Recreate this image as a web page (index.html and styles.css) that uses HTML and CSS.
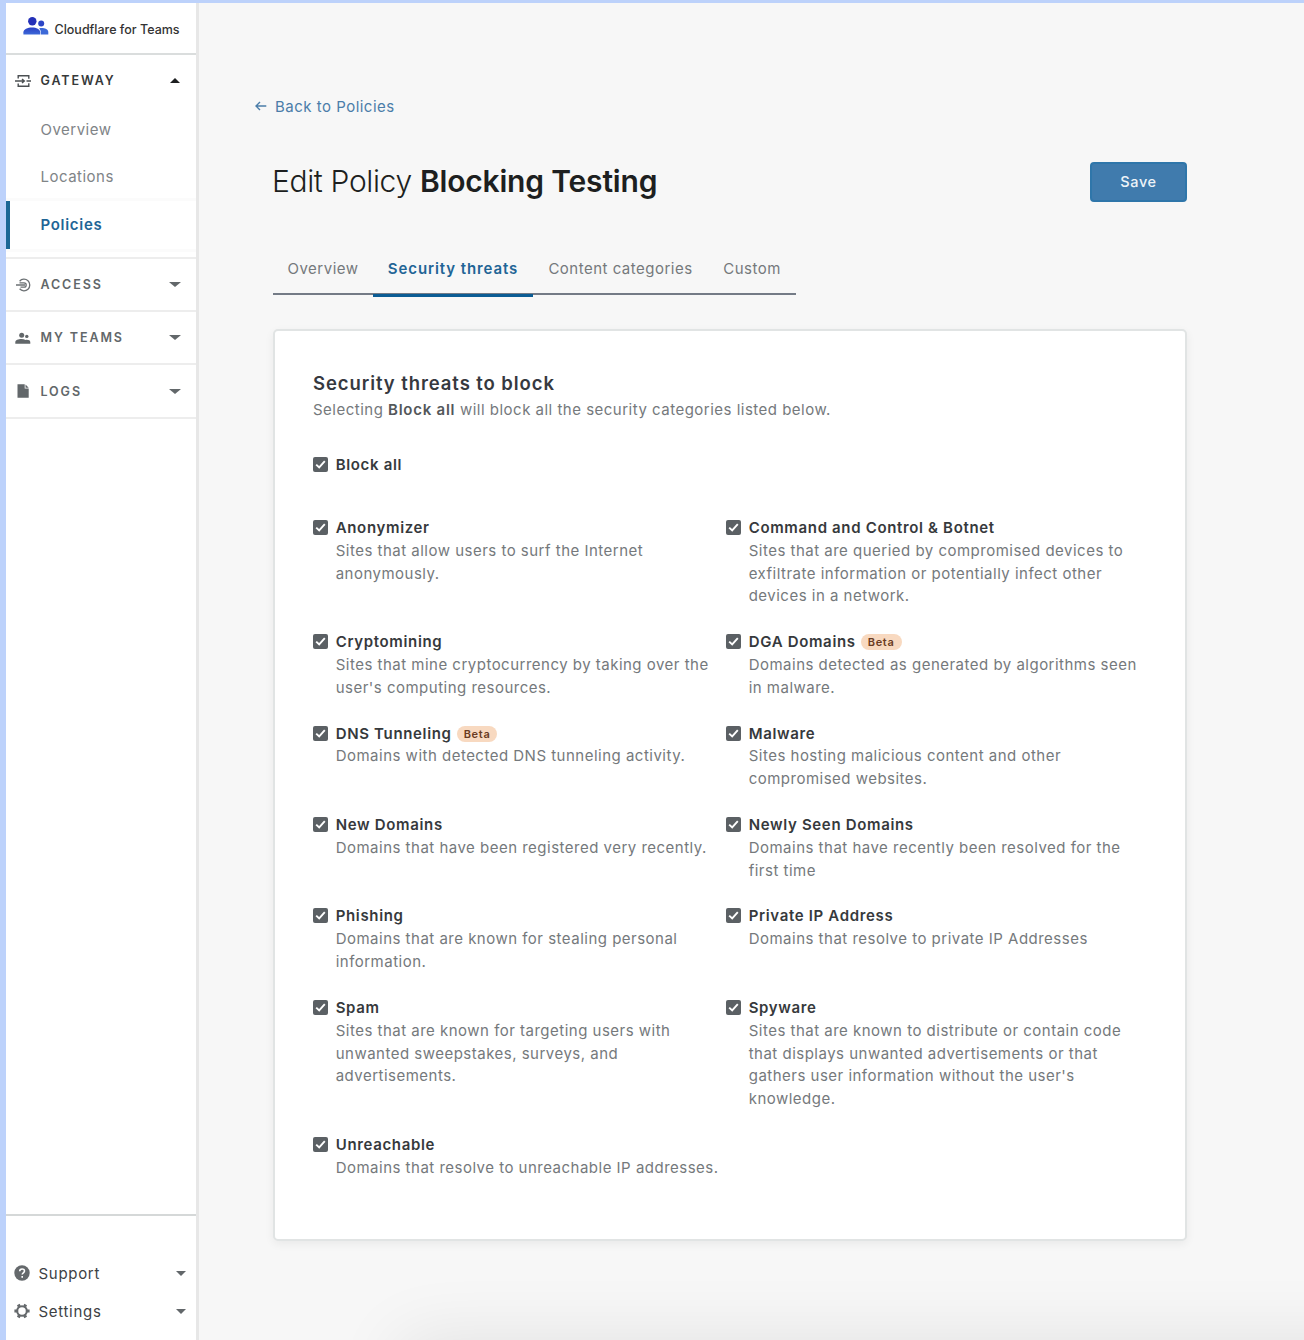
FILE: index.html
```
<!DOCTYPE html>
<html lang="en">
<head>
<meta charset="utf-8">
<title>Cloudflare for Teams</title>
<link rel="stylesheet" href="styles.css">
</head>
<body>
<div class="app">
  <aside class="sidebar">
    <div class="brand">
      <svg class="brand-icon" width="26" height="18" viewBox="0 0 26 18">
        <defs><linearGradient id="g" x1="0" y1="0" x2="0" y2="1"><stop offset="0" stop-color="#2a3fc4"/><stop offset="1" stop-color="#3d69d8"/></linearGradient></defs>
        <circle cx="9.3" cy="4.2" r="4.2" fill="#2430b8"/><circle cx="18.2" cy="6.4" r="3" fill="#2b45c6"/>
        <path d="M.4 17.5v-2.3c0-3.200 4.300-4.800 8.600-4.800s8.200 1.600 8.200 4.800v2.300z" fill="url(#g)"/>
        <path d="M17.800 17.500v-2.600c0-1.500-.7-2.600-1.700-3.500 3.600-.9 9.200.3 9.200 3.500v2.600z" fill="#3d69d8"/>
      </svg>
      <span class="brand-name">Cloudflare for Teams</span>
    </div>
    <nav class="nav">
      <div class="group open">
        <svg class="gi" width="18" height="14" viewBox="0 0 18 14" fill="none" stroke="#4b4f52" stroke-width="1.400"><path d="M3.200 4.600V1.700h10.600v3M3.200 9.400v2.900h10.600v-3M0 7h9M7 5 9.300 7 7 9M11.500 7H16"/></svg>
        <span class="gl">GATEWAY</span><i class="caret up"></i>
      </div>
      <a class="item">Overview</a>
      <a class="item">Locations</a>
      <a class="item active">Policies</a>
      <div class="group first">
        <svg class="gi" width="18" height="14" viewBox="0 0 18 14" fill="none" stroke="#6b7073" stroke-width="1.300"><path d="M4.600 3.200A5.800 5.800 0 1 1 4.600 10.800M1 7h9M4.500 4.800h4.500a2.200 2.200 0 0 1 0 4.400H5.500"/></svg>
        <span class="gl">ACCESS</span><i class="caret"></i>
      </div>
      <div class="group">
        <svg class="gi" width="18" height="14" viewBox="0 0 18 14" fill="#62676a"><circle cx="6.700" cy="4.200" r="2.500"/><circle cx="11.800" cy="5.400" r="1.700"/><path d="M.3 12.700v-1.500c0-2 3-3.100 6.200-3.100 1.700 0 3 .3 4 .9 2.500-.5 4.800.4 4.800 2.200v1.500z"/></svg>
        <span class="gl">MY TEAMS</span><i class="caret"></i>
      </div>
      <div class="group">
        <svg class="gi" width="18" height="14" viewBox="0 0 18 14" fill="#62676a"><path d="M2.500.2h7.200v4.300h4v9.300H2.500z"/><path d="M10.500.4l3.200 3.300h-3.200z"/></svg>
        <span class="gl">LOGS</span><i class="caret"></i>
      </div>
    </nav>
    <div class="foot">
      <div class="fi">
        <svg width="16" height="16" viewBox="0 0 16 16"><circle cx="8" cy="8" r="7.700" fill="#65696c"/><path d="M5.700 6.300c0-3.200 4.800-3 4.800-.3 0 1.800-2.300 1.800-2.300 3.600M8.200 11v1.700" fill="none" stroke="#fff" stroke-width="1.600"/></svg>
        <span>Support</span><i class="caret"></i>
      </div>
      <div class="fi">
        <svg width="16" height="16" viewBox="0 0 16 16" fill="none" stroke="#65696c"><circle cx="8" cy="8" r="4.800" stroke-width="2.100"/><path d="M5.300 3.500 4.300 1.500M10.700 3.500l1-2M13 8h2.600M10.700 12.500l1 2M5.300 12.500l-1 2M3 8H.4" stroke-width="3"/></svg>
        <span>Settings</span><i class="caret"></i>
      </div>
    </div>
  </aside>
  <main class="main">
    <a class="back"><svg width="12" height="10" viewBox="0 0 12 10" fill="none" stroke="#4b7da9" stroke-width="1.400"><path d="M11.300 5H1M5 1 1 5l4 4"/></svg><span>Back to Policies</span></a>
    <header class="head">
      <h1><span>Edit Policy</span> <b>Blocking Testing</b></h1>
      <button class="save">Save</button>
    </header>
    <div class="tabs"><a class="t1">Overview</a><a class="t2 on">Security threats</a><a class="t3">Content categories</a><a class="t4">Custom</a></div>
    <section class="card">
      <h2>Security threats to block</h2>
      <p class="intro">Selecting <b>Block all</b> will block all the security categories listed below.</p>
      <div class="opt all"><i class="cb"><svg viewBox="0 0 15 15"><path d="M3.200 7.600l3 2.900 5.600-6.300"/></svg></i><div><h3>Block all</h3></div></div>
      <div class="grid">
        <div class="opt"><i class="cb"><svg viewBox="0 0 15 15"><path d="M3.200 7.600l3 2.900 5.600-6.300"/></svg></i><div><h3>Anonymizer</h3><p>Sites that allow users to surf the Internet<br>anonymously.</p></div></div>
        <div class="opt"><i class="cb"><svg viewBox="0 0 15 15"><path d="M3.200 7.600l3 2.900 5.600-6.300"/></svg></i><div><h3>Command and Control &amp; Botnet</h3><p>Sites that are queried by compromised devices to<br>exfiltrate information or potentially infect other<br>devices in a network.</p></div></div>
        <div class="opt"><i class="cb"><svg viewBox="0 0 15 15"><path d="M3.200 7.600l3 2.900 5.600-6.300"/></svg></i><div><h3>Cryptomining</h3><p>Sites that mine cryptocurrency by taking over the<br>user's computing resources.</p></div></div>
        <div class="opt"><i class="cb"><svg viewBox="0 0 15 15"><path d="M3.200 7.600l3 2.900 5.600-6.300"/></svg></i><div><h3>DGA Domains<em>Beta</em></h3><p>Domains detected as generated by algorithms seen<br>in malware.</p></div></div>
        <div class="opt"><i class="cb"><svg viewBox="0 0 15 15"><path d="M3.200 7.600l3 2.900 5.600-6.300"/></svg></i><div><h3>DNS Tunneling<em>Beta</em></h3><p>Domains with detected DNS tunneling activity.</p></div></div>
        <div class="opt"><i class="cb"><svg viewBox="0 0 15 15"><path d="M3.200 7.600l3 2.900 5.600-6.300"/></svg></i><div><h3>Malware</h3><p>Sites hosting malicious content and other<br>compromised websites.</p></div></div>
        <div class="opt"><i class="cb"><svg viewBox="0 0 15 15"><path d="M3.200 7.600l3 2.900 5.600-6.300"/></svg></i><div><h3>New Domains</h3><p>Domains that have been registered very recently.</p></div></div>
        <div class="opt"><i class="cb"><svg viewBox="0 0 15 15"><path d="M3.200 7.600l3 2.900 5.600-6.300"/></svg></i><div><h3>Newly Seen Domains</h3><p>Domains that have recently been resolved for the<br>first time</p></div></div>
        <div class="opt"><i class="cb"><svg viewBox="0 0 15 15"><path d="M3.200 7.600l3 2.900 5.600-6.300"/></svg></i><div><h3>Phishing</h3><p>Domains that are known for stealing personal<br>information.</p></div></div>
        <div class="opt"><i class="cb"><svg viewBox="0 0 15 15"><path d="M3.200 7.600l3 2.900 5.600-6.300"/></svg></i><div><h3>Private IP Address</h3><p>Domains that resolve to private IP Addresses</p></div></div>
        <div class="opt"><i class="cb"><svg viewBox="0 0 15 15"><path d="M3.200 7.600l3 2.900 5.600-6.300"/></svg></i><div><h3>Spam</h3><p>Sites that are known for targeting users with<br>unwanted sweepstakes, surveys, and<br>advertisements.</p></div></div>
        <div class="opt"><i class="cb"><svg viewBox="0 0 15 15"><path d="M3.200 7.600l3 2.900 5.600-6.300"/></svg></i><div><h3>Spyware</h3><p>Sites that are known to distribute or contain code<br>that displays unwanted advertisements or that<br>gathers user information without the user's<br>knowledge.</p></div></div>
        <div class="opt"><i class="cb"><svg viewBox="0 0 15 15"><path d="M3.200 7.600l3 2.900 5.600-6.300"/></svg></i><div><h3>Unreachable</h3><p>Domains that resolve to unreachable IP addresses.</p></div></div>
      </div>
    </section>
  </main>
</div>
</body>
</html>
```
FILE: styles.css
```
* { box-sizing: border-box; }
body { margin: 0; background: #bdd2fb; font-family: Inter, "Liberation Sans", sans-serif; font-size: 15px; letter-spacing: .49px; color: #75797c; }
h1, h2, h3, p { margin: 0; }
.app { display: flex; height: 1340px; padding: 3px 0 0 6px; overflow: hidden; }
.sidebar { width: 193px; flex: none; display: flex; flex-direction: column; background: #fff; border-right: 3px solid #e7e7e7; }
.brand { height: 52px; flex: none; display: flex; align-items: center; padding: 0 0 2px 16.500px; border-bottom: 2px solid #dadddd; }
.brand-icon { flex: none; margin-bottom: 3px; }
.brand-name { font-size: 12.5px; font-weight: 500; letter-spacing: 0; margin: 4px 0 0 6px; color: #333; white-space: nowrap; }
.group { display: flex; align-items: center; height: 53.500px; padding: 1px 15px 0 9px; border-bottom: 2px solid #ededed; color: #62676a; }
.group.open { height: 51px; padding-top: 0; border: 0; color: #36393a; }
.group.first { border-top: 2px solid #ededed; height: 55px; margin-top: 7.500px; }
.gi { flex: none; }
.gl { flex: 1; margin-left: 7.500px; font-size: 12.500px; font-weight: 600; letter-spacing: 1.9px; white-space: nowrap; }
.caret { width: 0; height: 0; border: 6px solid transparent; border-bottom: 0; border-top: 5.500px solid #62676a; }
.caret.up { border: 5px solid transparent; border-top: 0; border-bottom: 5px solid #1d1f20; margin-right: 1px; }
.item { display: flex; align-items: center; height: 47.500px; padding: 0 0 1px 34.500px; color: #808487; }
.item.active { height: 48px; padding: 0 0 2px 30.500px; border-left: 4px solid #1b6795; color: #1f6596; font-weight: 600; letter-spacing: .7px; box-shadow: 0 -3px 0 #fbfbfb, 0 3px 0 #fbfbfb; }
.foot { margin-top: auto; height: 126px; padding: 38px 10px 0 8px; border-top: 2px solid #d5d8d8; }
.fi { display: flex; align-items: center; height: 38px; color: #3d4144; letter-spacing: .7px; }
.fi span { flex: 1; margin-left: 8.500px; }
.fi .caret { border-width: 5px 5px 0; }
.main { position: relative; flex: 1; background: #f7f7f7; padding: 91px 117px 0 74px; overflow: hidden; }
.main::after { content: ""; position: absolute; left: 215px; right: -200px; top: 1350px; height: 60px; box-shadow: 0 0 70px 14px rgba(0,0,0,.09); }
.back { display: flex; align-items: center; height: 24px; margin-left: -18px; color: #4b7da9; }
.back span { margin-left: 8px; }
.head { display: flex; justify-content: space-between; margin-top: 42px; }
h1 { margin-left: -1px; font-size: 30px; line-height: 42px; font-weight: 300; letter-spacing: -.35px; color: #1d1f20; white-space: nowrap; }
h1 b { font-weight: 600; letter-spacing: -.18px; }
.save { width: 97px; height: 40px; margin: 2px 0 0; padding: 0 0 1px; border: 2px solid #2f76aa; border-radius: 4px; background: #407bad; color: #edf3f8; font: 500 14.500px Inter, sans-serif; letter-spacing: .6px; }
.tabs { display: flex; width: 523px; height: 53px; margin-top: 40px; border-bottom: 2px solid #747b86; }
.tabs a { height: 55px; padding-top: 18px; line-height: 18px; text-align: center; white-space: nowrap; }
.t1 { width: 100px; } .t2 { width: 160px; } .t3 { width: 175px; } .t4 { width: 88px; }
.tabs .on { border-bottom: 3px solid #0b5c94; color: #1f6596; font-weight: 600; letter-spacing: .9px; }
.card { height: 912px; margin-top: 34px; padding: 39px 38px; background: #fff; border: 2px solid #e1e4e4; border-radius: 5px; box-shadow: 0 3px 10px rgba(0,0,0,.06); }
h2 { font-size: 18.500px; line-height: 26px; font-weight: 600; letter-spacing: .92px; color: #36393f; }
.intro { margin-top: 1px; line-height: 26px; }
.intro b { font-weight: 600; color: #53575a; letter-spacing: .75px; }
.grid { display: grid; grid-template-columns: 413px 413px; row-gap: 22.860px; }
.opt { display: flex; line-height: 22.860px; white-space: nowrap; }
.opt.all { margin: 31px 0 40px; }
.cb { width: 15px; height: 15px; margin: 3px 7.700px 0 0; border-radius: 2px; background: #5b6064; flex: none; }
.cb svg { display: block; fill: none; stroke: #fff; stroke-width: 1.900; }
h3 { display: flex; align-items: center; font-size: 15px; font-weight: 600; line-height: 22.860px; letter-spacing: .66px; color: #36393c; }
em { height: 16px; margin: -1px 0 0 5px; padding: 0 7px; border-radius: 8px; background: #f8d9c0; color: #6a3b22; font: 600 11px/16px Inter, sans-serif; letter-spacing: .7px; }
```
